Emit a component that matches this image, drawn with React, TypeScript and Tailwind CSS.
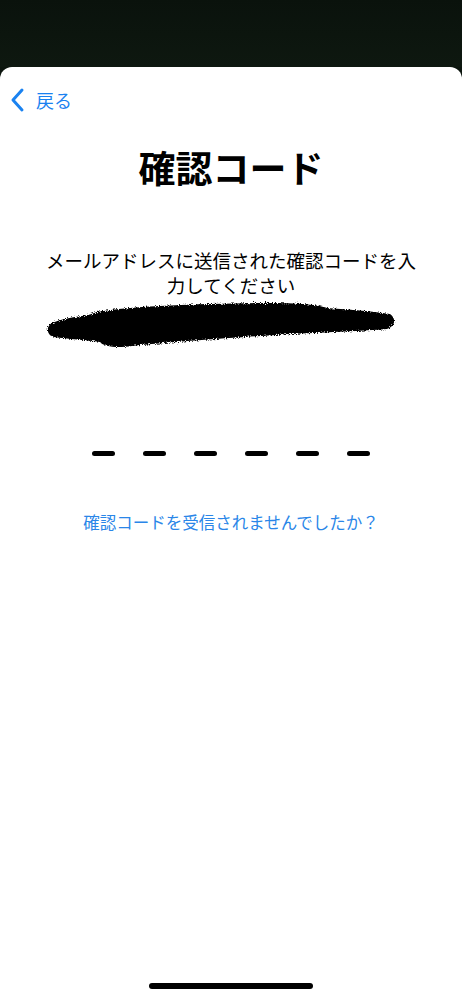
import React from "react";

export default function App() {
  const dashes = [0, 1, 2, 3, 4, 5];
  return (
    <div
      className="w-[462px] h-[999px] bg-[#0c150e] overflow-hidden flex flex-col"
      style={{ fontFamily: '"Noto Sans CJK JP", "Noto Sans", sans-serif' }}
    >
      <div className="h-[67px] shrink-0 bg-gradient-to-b from-[#0a120c] to-[#0e1810]" />
      <div className="flex-1 bg-white rounded-t-[12px] flex flex-col relative">
        <div className="flex items-center h-[34px] mt-[16px] pl-[10px]">
          <svg width="16" height="26" viewBox="0 0 16 26" className="mr-[10px]">
            <path d="M12 3 L3 13 L12 23" fill="none" stroke="#1a82f0" strokeWidth="3" strokeLinecap="round" strokeLinejoin="round" />
          </svg>
          <span className="text-[18px] text-[#1a82f0] leading-none">戻る</span>
        </div>
        <h1 className="text-center text-[37px] font-bold text-black leading-none mt-[32px]">確認コード</h1>
        <p className="text-center text-[18.5px] text-black leading-[25px] mt-[62px] px-[38px]">
          メールアドレスに送信された確認コードを入力してください
        </p>
        <div className="flex mt-[0px] h-[56px] pl-[42px]">
          <svg width="360" height="56" viewBox="0 0 360 56">
            <defs>
              <filter id="rough" x="-5%" y="-20%" width="110%" height="140%">
                <feTurbulence type="fractalNoise" baseFrequency="0.9" numOctaves="2" result="n" />
                <feDisplacementMap in="SourceGraphic" in2="n" scale="5" />
              </filter>
            </defs>
            <g filter="url(#rough)" fill="#000">
              <path d="M55 14 C90 8 150 6 220 5 C250 5 275 6 285 10 C300 11 330 13 348 16 C354 20 354 28 345 31 C320 33 290 34 250 36 C200 39 130 44 90 48 C75 50 62 49 58 44 C45 42 25 41 12 39 C4 37 4 28 10 25 C20 21 30 19 40 18 C46 17 50 16 55 14 Z" />
            </g>
          </svg>
        </div>
        <div className="flex justify-center gap-[28px] mt-[97px]">
          {dashes.map((d) => (
            <div key={d} className="w-[23px] h-[5px] rounded-full bg-black" />
          ))}
        </div>
        <p className="text-center text-[16.5px] text-[#2a86e8] leading-none mt-[58px]">
          確認コードを受信されませんでしたか？
        </p>
        <div className="absolute bottom-[10px] left-[149px] w-[164px] h-[6px] rounded-full bg-black" />
      </div>
    </div>
  );
}
